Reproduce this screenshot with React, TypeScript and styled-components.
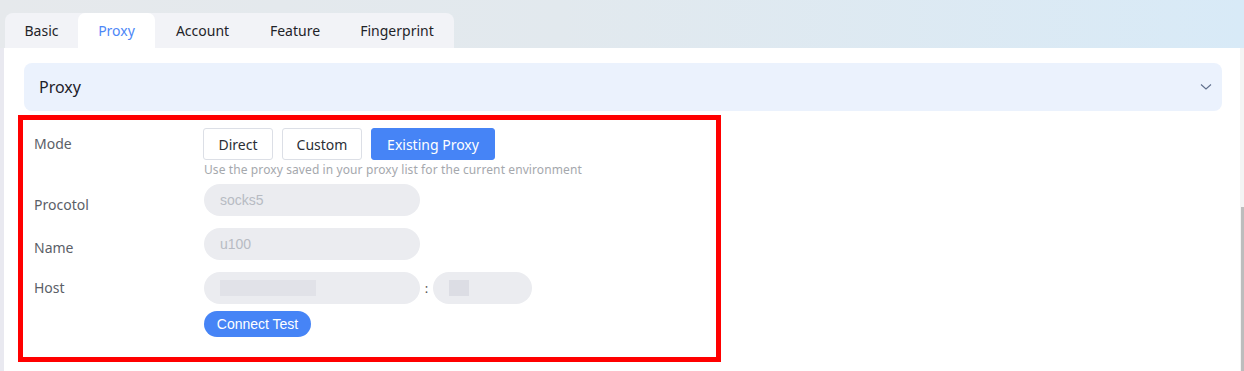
import styled, { createGlobalStyle } from "styled-components";

const GlobalStyle = createGlobalStyle`
  html, body {
    margin: 0;
    padding: 0;
  }
  body {
    background: linear-gradient(90deg, #e6e9ec 0%, #e2e9ee 45%, #d8eaf7 100%);
    font-family: "Noto Sans", "Liberation Sans", sans-serif;
    overflow: hidden;
  }
`

const Page = styled.div`
    display: flex;
    flex-direction: column;
    height: 371px;
    width: 1244px;
    padding-top: 13px;
    box-sizing: border-box;
`

const TabBar = styled.div`
    display: flex;
    align-items: stretch;
    width: 449px;
    height: 35px;
    margin-left: 5px;
    background-color: #f2f3f7;
    border-radius: 8px 8px 0 0;
`

const Tab = styled.div<{ $active?: boolean; $width: number }>`
    display: flex;
    align-items: center;
    justify-content: center;
    width: ${p => p.$width}px;
    font-size: 14px;
    color: ${p => (p.$active ? "#4d87f7" : "#1f2329")};
    background-color: ${p => (p.$active ? "#ffffff" : "transparent")};
    border-radius: 7px 7px 0 0;
`

const Body = styled.div`
    flex: 1;
    display: flex;
    background-color: #e9e9f0;
    padding-left: 4px;
`

const Panel = styled.div`
    flex: 1;
    display: flex;
    flex-direction: column;
    background-color: #ffffff;
    padding: 15px 18px 0 14px;
`

const ScrollTrack = styled.div`
    width: 4px;
    display: flex;
    flex-direction: column;
    background-color: #f4f4f4;
    padding-top: 159px;
`

const ScrollThumb = styled.div`
    flex: 1;
    margin-left: 1px;
    background-color: #bdbdbd;
`

const CollapseHeader = styled.div`
    display: flex;
    align-items: center;
    justify-content: space-between;
    height: 48px;
    margin-left: 6px;
    padding: 0 10px 0 15px;
    background-color: #ebf2fd;
    border-radius: 8px;
    font-size: 16px;
    color: #1d2129;
`

const FormBox = styled.div`
    display: flex;
    flex-direction: column;
    width: 682px;
    height: 229px;
    margin-top: 4px;
    border: 5px solid #ff0000;
    padding: 8px 0 0 11px;
    box-sizing: content-box;
`

const Row = styled.div<{ $gap?: number }>`
    display: flex;
    align-items: flex-start;
    margin-top: ${p => p.$gap ?? 0}px;
`

const Label = styled.div<{ $offset?: number }>`
    width: 170px;
    flex-shrink: 0;
    font-size: 14px;
    color: #5b6068;
    line-height: 20px;
    padding-top: ${p => p.$offset ?? 6}px;
`

const Field = styled.div`
    display: flex;
    flex-direction: column;
`

const ButtonGroup = styled.div`
    display: flex;
    gap: 9px;
    margin-left: -1px;
`

const ModeButton = styled.div<{ $active?: boolean; $width: number }>`
    display: flex;
    align-items: center;
    justify-content: center;
    width: ${p => p.$width}px;
    height: 32px;
    box-sizing: border-box;
    border-radius: 3px;
    font-size: 14px;
    border: 1px solid ${p => (p.$active ? "#4684f6" : "#dcdfe6")};
    background-color: ${p => (p.$active ? "#4684f6" : "#ffffff")};
    color: ${p => (p.$active ? "#ffffff" : "#2b2f36")};
`

const Hint = styled.div`
    margin-top: 2px;
    font-size: 12px;
    letter-spacing: 0.1px;
    line-height: 16px;
    color: #a5a8ad;
`

const Pill = styled.div<{ $width: number }>`
    display: flex;
    align-items: center;
    width: ${p => p.$width}px;
    height: 32px;
    box-sizing: border-box;
    padding-left: 16px;
    border-radius: 16px;
    background-color: #ebecf0;
    font-family: "Liberation Sans", Arial, sans-serif;
    font-size: 14px;
    color: #b7bbc3;
`

const HostLine = styled.div`
    display: flex;
    align-items: center;
`

const Colon = styled.span`
    width: 13px;
    text-align: center;
    font-size: 13px;
    color: #555;
`

const Blur = styled.span<{ $width: number; $tone: string }>`
    display: inline-block;
    width: ${p => p.$width}px;
    height: 16px;
    background-color: ${p => p.$tone};
`

const ConnectButton = styled.div`
    display: flex;
    align-items: center;
    justify-content: center;
    width: 107px;
    height: 26px;
    margin-top: 7px;
    border-radius: 13px;
    background-color: #4684f6;
    color: #ffffff;
    font-family: "Liberation Sans", Arial, sans-serif;
    font-size: 14px;
`

const Chevron = () => (
    <svg width="12" height="8" viewBox="0 0 12 8" fill="none">
        <path d="M1 1.5 L6 6 L11 1.5" stroke="#5f6f8c" strokeWidth="1.1" />
    </svg>
)

const tabs = [
    { name: "Basic", width: 73 },
    { name: "Proxy", width: 77 },
    { name: "Account", width: 95 },
    { name: "Feature", width: 90 },
    { name: "Fingerprint", width: 114 },
]

export default function App() {
    return (
        <Page>
            <GlobalStyle />
            <TabBar>
                {tabs.map(t => (
                    <Tab key={t.name} $width={t.width} $active={t.name === "Proxy"}>
                        {t.name}
                    </Tab>
                ))}
            </TabBar>
            <Body>
                <Panel>
                    <CollapseHeader>
                        <span>Proxy</span>
                        <Chevron />
                    </CollapseHeader>
                    <FormBox>
                        <Row>
                            <Label $offset={6}>Mode</Label>
                            <Field>
                                <ButtonGroup>
                                    <ModeButton $width={70}>Direct</ModeButton>
                                    <ModeButton $width={80}>Custom</ModeButton>
                                    <ModeButton $width={124} $active>Existing Proxy</ModeButton>
                                </ButtonGroup>
                                <Hint>Use the proxy saved in your proxy list for the current environment</Hint>
                            </Field>
                        </Row>
                        <Row $gap={6}>
                            <Label $offset={11}>Procotol</Label>
                            <Pill $width={216}>socks5</Pill>
                        </Row>
                        <Row $gap={12}>
                            <Label $offset={10}>Name</Label>
                            <Pill $width={216}>u100</Pill>
                        </Row>
                        <Row $gap={12}>
                            <Label $offset={6}>Host</Label>
                            <Field>
                                <HostLine>
                                    <Pill $width={216}>
                                        <Blur $width={96} $tone="#e1e2e8" />
                                    </Pill>
                                    <Colon>:</Colon>
                                    <Pill $width={99}>
                                        <Blur $width={20} $tone="#dcdde4" />
                                    </Pill>
                                </HostLine>
                                <ConnectButton>Connect Test</ConnectButton>
                            </Field>
                        </Row>
                    </FormBox>
                </Panel>
                <ScrollTrack>
                    <ScrollThumb />
                </ScrollTrack>
            </Body>
        </Page>
    )
}
